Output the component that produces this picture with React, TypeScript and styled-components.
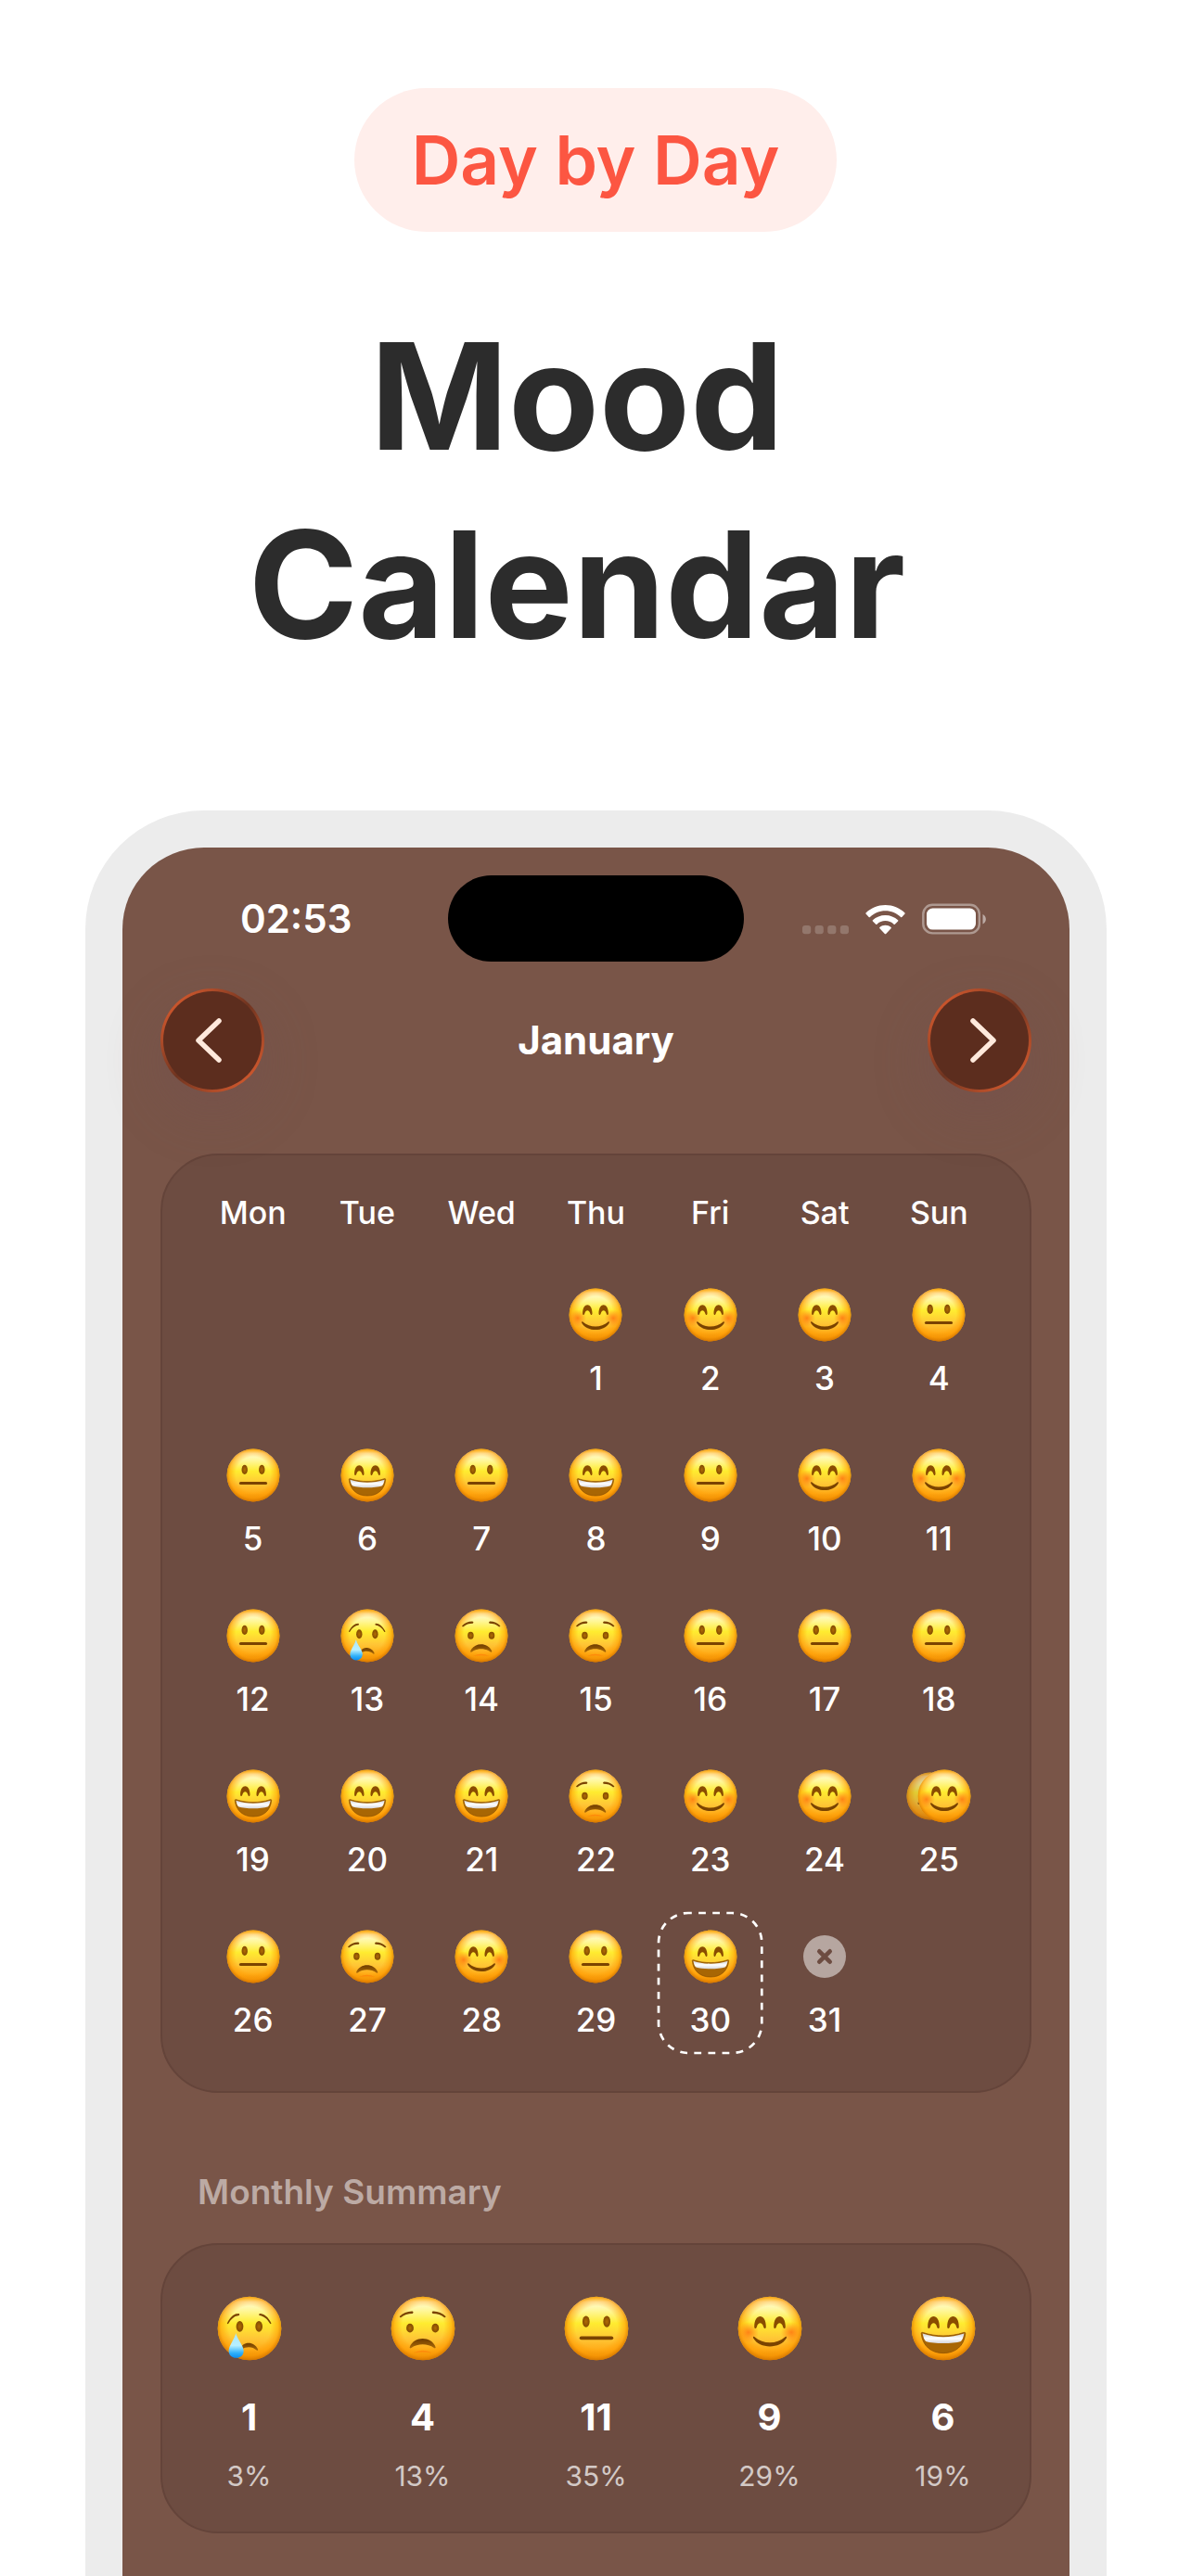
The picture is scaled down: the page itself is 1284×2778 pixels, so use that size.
import React from "react";
import styled, { createGlobalStyle } from "styled-components";

const GlobalStyle = createGlobalStyle`
  *, *::before, *::after { box-sizing: border-box; }
  body {
    margin: 0;
    background: #ffffff;
    font-family: Inter, "Liberation Sans", sans-serif;
    -webkit-font-smoothing: antialiased;
  }
`;

type Mood = "crying" | "worried" | "neutral" | "smiling" | "grinning";

const Page = styled.main`
  min-height: 100vh;
  display: flex;
  flex-direction: column;
  align-items: center;
  padding-top: 95px;
`;

const Tag = styled.p`
  margin: 0;
  padding: 0 62px;
  border-radius: 78px;
  background: #ffeeeb;
  color: #fc5642;
  font-size: 73px;
  font-weight: 600;
  line-height: 155px;
`;

const Title = styled.h1`
  margin: 76px 0 142px;
  padding-right: 40px;
  color: #2c2c2c;
  font-size: 160px;
  font-weight: 700;
  line-height: 203px;
  text-align: center;
`;

const Phone = styled.section`
  flex: 1;
  display: flex;
  align-self: stretch;
  margin: 0 91px 0 92px;
  border: 40px solid #ececec;
  border-bottom: 0;
  border-radius: 128px 128px 0 0;
  background: #ececec;
`;

const Screen = styled.div`
  flex: 1;
  min-width: 0;
  padding: 30px 41px 40px;
  border-radius: 88px 88px 0 0;
  background: #795548;
`;

const StatusBar = styled.div`
  display: grid;
  grid-template-columns: 1fr 319px 1fr;
  align-items: center;
  padding: 0 44px;
`;

const Clock = styled.time`
  padding-left: 42px;
  color: #ffffff;
  font-size: 42px;
  font-weight: 600;
  line-height: 48px;
`;

const Island = styled.div`
  height: 93px;
  border-radius: 47px;
  background: #000000;
`;

const StatusIcons = styled.div`
  display: flex;
  align-items: flex-end;
  justify-content: flex-end;
  gap: 18px;
  padding-right: 4px;
`;

const MonthNav = styled.nav`
  display: flex;
  align-items: center;
  justify-content: space-between;
  margin: 29px 0 66px;
`;

const NavButton = styled.button`
  display: grid;
  place-items: center;
  width: 112px;
  height: 112px;
  padding: 0;
  border: 3px solid transparent;
  border-radius: 50%;
  background:
    linear-gradient(#5c2d1e, #5c2d1e) padding-box,
    linear-gradient(135deg, #c9552c 15%, #6f3420 50%, #c9552c 85%) border-box;
  box-shadow: 0 22px 60px rgba(112, 76, 84, 0.3);
`;

const MonthName = styled.h2`
  margin: 0;
  color: #ffffff;
  font-size: 42px;
  font-weight: 700;
  line-height: 52px;
`;

const Card = styled.div`
  border: 2px solid #64443a;
  border-radius: 62px;
  background: #6d4c41;
`;

const CalendarCard = styled(Card)`
  padding: 42px 36px 30px;
`;

const CalendarTable = styled.table`
  width: 100%;
  table-layout: fixed;
  border-collapse: collapse;
`;

const Weekday = styled.th`
  padding: 0 0 32px;
  color: #ffffff;
  font-size: 34px;
  font-weight: 500;
  line-height: 40px;
`;

const DayCell = styled.td`
  padding: 10px 5px;
`;

const DayButton = styled.button`
  position: relative;
  display: flex;
  flex-direction: column;
  align-items: center;
  gap: 19px;
  width: 100%;
  padding: 19px 0 17px;
  border: 0;
  background: none;
  color: #ffffff;
  font-family: inherit;
  font-size: 35px;
  font-weight: 500;
  line-height: 40px;
`;

const MoodSlot = styled.span`
  display: flex;
  align-items: center;
  justify-content: center;
  height: 58px;
`;

const FaceSvg = styled.svg<{ $size: number }>`
  display: block;
  flex: none;
  width: ${(p) => p.$size}px;
  height: ${(p) => p.$size}px;
`;

const EarlierMood = styled.span`
  margin-right: -40px;
  opacity: 0.8;
`;

const LatestMood = styled.span`
  position: relative;
`;

const TodayOutline = styled.svg`
  position: absolute;
  inset: 0;
  width: 100%;
  height: 100%;
  overflow: visible;

  rect {
    width: calc(100% - 2px);
    height: calc(100% - 2px);
  }
`;

const SectionTitle = styled.h3`
  margin: 83px 0 31px;
  padding-left: 40px;
  color: #bcaaa4;
  font-size: 37px;
  font-weight: 600;
  line-height: 48px;
`;

const SummaryCard = styled(Card).attrs({ as: "ul" })`
  display: grid;
  grid-template-columns: repeat(5, 1fr);
  margin: 0;
  padding: 55px 0 42px;
  list-style: none;
`;

const SummaryItem = styled.li`
  display: flex;
  flex-direction: column;
  align-items: center;
`;

const Count = styled.strong`
  margin: 37px 0 21px;
  color: #ffffff;
  font-size: 40px;
  font-weight: 700;
  line-height: 48px;
`;

const Percent = styled.span`
  color: #d3c9c6;
  font-size: 30px;
  font-weight: 400;
  line-height: 36px;
`;

const HiddenDefs = styled.svg`
  position: absolute;
  width: 0;
  height: 0;
`;

const INK = "#7a4300";

function FacePaints() {
  return (
    <HiddenDefs aria-hidden="true">
      <defs>
        <linearGradient id="skin" x1="0" y1="0" x2="0" y2="1">
          <stop offset="0" stopColor="#ffd83a" />
          <stop offset="0.08" stopColor="#fffbd0" />
          <stop offset="0.22" stopColor="#fff79a" />
          <stop offset="0.42" stopColor="#ffec30" />
          <stop offset="0.66" stopColor="#ffc636" />
          <stop offset="0.84" stopColor="#ffab17" />
          <stop offset="1" stopColor="#dd7f04" />
        </linearGradient>
        <radialGradient id="rim" cx="0.5" cy="0.48" r="0.53">
          <stop offset="0.62" stopColor="#ff9c00" stopOpacity="0" />
          <stop offset="0.84" stopColor="#ff9a00" stopOpacity="0.55" />
          <stop offset="1" stopColor="#cf7200" stopOpacity="1" />
        </radialGradient>
        <radialGradient id="blush">
          <stop offset="0" stopColor="#ff7410" stopOpacity="0.85" />
          <stop offset="1" stopColor="#ff7f10" stopOpacity="0" />
        </radialGradient>
        <radialGradient id="eye">
          <stop offset="0" stopColor="#b06c05" />
          <stop offset="1" stopColor="#824a00" />
        </radialGradient>
        <linearGradient id="frown" x1="0" y1="0" x2="0" y2="1">
          <stop offset="0" stopColor="#6d3b00" />
          <stop offset="1" stopColor="#ac6a06" />
        </linearGradient>
        <linearGradient id="teeth" x1="0" y1="0" x2="0" y2="1">
          <stop offset="0" stopColor="#cfd2d8" />
          <stop offset="0.5" stopColor="#ffffff" />
          <stop offset="1" stopColor="#d5d5da" />
        </linearGradient>
        <linearGradient id="tear" x1="0" y1="0" x2="0" y2="1">
          <stop offset="0" stopColor="#a9e6fb" />
          <stop offset="0.5" stopColor="#b8f0ff" />
          <stop offset="0.8" stopColor="#2fb0fa" />
          <stop offset="1" stopColor="#0a8df0" />
        </linearGradient>
      </defs>
    </HiddenDefs>
  );
}

const archEye = (x: number) =>
  `M${x - 9} 47 C${x - 9} 26 ${x + 9} 26 ${x + 9} 47 C${x + 9} 51 ${x + 6} 51 ${x + 5} 47 C${x + 3} 40 ${x - 3} 40 ${x - 5} 47 C${x - 6} 51 ${x - 9} 51 ${x - 9} 47Z`;

const features: Record<Mood, React.ReactNode> = {
  crying: (
    <>
      <path d="M15.500 42 C20 32 27 27 33 27 Q35.500 27.500 34 30 C27 31 22 35 17.500 42.500 Q16 44 15.500 42Z" fill={INK} />
      <path d="M83.500 42 C79 32 72 27 66 27 Q63.500 27.500 65 30 C72 31 77 35 81.500 42.500 Q83 44 83.500 42Z" fill={INK} />
      <ellipse cx="35" cy="47" rx="5.500" ry="8.500" fill="url(#eye)" />
      <ellipse cx="64.500" cy="47" rx="5.500" ry="8.500" fill="url(#eye)" />
      <path d="M35 83 C39 69 57 69 63 82 Q63.500 85 61 83.500 C55 78 46 77 38 82Z" fill="url(#frown)" />
      <path d="M29 57 C31 67 41 76 41 84.500 C41 91 36 95.500 29.500 95.500 C23 95.500 18 91 18 84.500 C18 76 27 67 29 57Z" fill="url(#tear)" />
    </>
  ),
  worried: (
    <>
      <path d="M14 31.500 C19 26 27 23 34 23.500 Q36.500 25 34 27 C27 27 21 29 16.500 33 Q14 34 14 31.500Z" fill={INK} />
      <path d="M85 31.500 C80 26 72 23 65 23.500 Q62.500 25 65 27 C72 27 78 29 82.500 33 Q85 34 85 31.500Z" fill={INK} />
      <ellipse cx="30" cy="49.500" rx="5.600" ry="7" fill="url(#eye)" />
      <ellipse cx="69" cy="49.500" rx="5.600" ry="7" fill="url(#eye)" />
      <path d="M29.500 79 C36 61.500 63 61.500 69.500 79 Q69.500 81.500 67 80 C57 73 42 73 32 80 Q29.500 81.500 29.500 79Z" fill="url(#frown)" />
      <path d="M35 88 Q50 80 64 88 Q50 85 35 88Z" fill="#ff7f0a" opacity="0.7" />
    </>
  ),
  neutral: (
    <>
      <ellipse cx="34" cy="39.500" rx="5.500" ry="8.800" fill="url(#eye)" />
      <ellipse cx="66" cy="39.500" rx="5.500" ry="8.800" fill="url(#eye)" />
      <rect x="24" y="62" width="52" height="5.400" rx="2.700" fill={INK} />
    </>
  ),
  smiling: (
    <>
      <circle cx="17" cy="56" r="16" fill="url(#blush)" />
      <circle cx="83" cy="56" r="16" fill="url(#blush)" />
      <path d={archEye(35)} fill="#8a4d00" />
      <path d={archEye(65)} fill="#8a4d00" />
      <path d="M24.500 65 C23.500 62.500 25.500 62 27 63.500 C39 74.500 61 74.500 73 63.500 C74.500 62 76.500 62.500 75.500 65 C66 82 34 82 24.500 65Z" fill={INK} />
    </>
  ),
  grinning: (
    <>
      <path d={archEye(35)} fill="#8a4d00" />
      <path d={archEye(65)} fill="#8a4d00" />
      <path d="M16 58 C16 56 17.500 56 19 56.500 C38 63 62 63 81 56.500 C82.500 56 84 56 84 58 C82 77 69 88 50 88 C31 88 18 77 16 58Z" fill="#a86604" stroke="#824800" />
      <path d="M18 58 C38 65 62 65 82 58 C81 63 79.500 68 77 70 C65 74 35 74 23 70 C20.500 68 19 63 18 58Z" fill="url(#teeth)" />
    </>
  ),
};

function Face({ mood, size }: { mood: Mood; size: number }) {
  return (
    <FaceSvg $size={size} viewBox="0 0 100 100" role="img" aria-label={mood}>
      <circle cx="50" cy="50" r="49" fill="url(#skin)" />
      <circle cx="50" cy="50" r="49" fill="url(#rim)" />
      {features[mood]}
    </FaceSvg>
  );
}

function Chevron({ direction }: { direction: "left" | "right" }) {
  const d = direction === "left" ? "M25 4 L3 25 L25 46" : "M11 4 L33 25 L11 46";
  return (
    <svg width="36" height="50" viewBox="0 0 36 50" fill="none" aria-hidden="true">
      <path d={d} stroke="#ffe9dc" strokeWidth="5.500" strokeLinecap="round" strokeLinejoin="round" />
    </svg>
  );
}

function SignalDots() {
  return (
    <svg width="50" height="10" viewBox="0 0 50 10" aria-hidden="true">
      {[0, 13.6, 27.2, 40.8].map((x) => (
        <rect key={x} x={x} y="0" width="9.200" height="9.200" rx="3" fill="#ffffff" fillOpacity="0.2" />
      ))}
    </svg>
  );
}

function WifiIcon() {
  return (
    <svg width="43" height="33" viewBox="0 0 43 33" fill="#ffffff" aria-hidden="true">
      <path d="M21.500 1 C29.600 1 37 4.200 42.500 9.400 Q43 10 42.500 10.600 L39.300 13.900 Q38.700 14.400 38.100 13.900 C33.700 9.700 27.900 7.200 21.500 7.200 C15.100 7.200 9.300 9.700 4.900 13.900 Q4.300 14.400 3.700 13.900 L0.500 10.600 Q0 10 0.500 9.400 C6 4.200 13.400 1 21.500 1Z" />
      <path d="M21.500 11.900 C26.700 11.900 31.500 13.900 35.100 17.200 Q35.700 17.800 35.100 18.400 L31.800 21.700 Q31.200 22.200 30.600 21.700 C28.200 19.500 25 18.100 21.500 18.100 C18 18.100 14.800 19.500 12.400 21.700 Q11.800 22.200 11.200 21.700 L7.900 18.400 Q7.300 17.800 7.900 17.200 C11.500 13.900 16.300 11.900 21.500 11.900Z" />
      <path d="M21.500 22.800 C23.800 22.800 25.900 23.600 27.600 25 Q28.200 25.600 27.600 26.200 L22.200 31.900 Q21.500 32.500 20.800 31.900 L15.400 26.200 Q14.800 25.600 15.400 25 C17.100 23.600 19.200 22.800 21.500 22.800Z" />
    </svg>
  );
}

function BatteryIcon() {
  return (
    <svg width="70" height="34" viewBox="0 0 70 34" aria-hidden="true">
      <rect x="1.300" y="1.800" width="60.500" height="30.600" rx="10" fill="none" stroke="#ffffff" strokeOpacity="0.4" strokeWidth="2.400" />
      <rect x="5" y="5.600" width="53" height="23" rx="6.500" fill="#ffffff" />
      <path d="M65.500 12 C70 14 70 20.500 65.500 22.500Z" fill="#ffffff" fillOpacity="0.5" />
    </svg>
  );
}

function NoEntryIcon() {
  return (
    <svg width="46" height="46" viewBox="0 0 46 46" role="img" aria-label="no entry">
      <circle cx="23" cy="23" r="23" fill="#b6a6a0" />
      <path d="M17.300 17.300 L28.700 28.700 M28.700 17.300 L17.300 28.700" stroke="#6d4c41" strokeWidth="4.600" strokeLinecap="round" />
    </svg>
  );
}

const weekdays = ["Mon", "Tue", "Wed", "Thu", "Fri", "Sat", "Sun"];

const FIRST_WEEKDAY = 3;
const TODAY = 30;

const moods: (Mood | null)[] = [
  "smiling", "smiling", "smiling", "neutral",
  "neutral", "grinning", "neutral", "grinning", "neutral", "smiling", "smiling",
  "neutral", "crying", "worried", "worried", "neutral", "neutral", "neutral",
  "grinning", "grinning", "grinning", "worried", "smiling", "smiling", "smiling",
  "neutral", "worried", "smiling", "neutral", "grinning", null,
];

const earlierMoods: Record<number, Mood> = { 25: "neutral" };

const weeks = Array.from({ length: 5 }, (_, w) =>
  weekdays.map((_, d) => {
    const day = w * 7 + d - FIRST_WEEKDAY + 1;
    return day >= 1 && day <= moods.length ? day : null;
  }),
);

const summary: { mood: Mood; count: number; share: string }[] = [
  { mood: "crying", count: 1, share: "3%" },
  { mood: "worried", count: 4, share: "13%" },
  { mood: "neutral", count: 11, share: "35%" },
  { mood: "smiling", count: 9, share: "29%" },
  { mood: "grinning", count: 6, share: "19%" },
];

function Day({ day }: { day: number }) {
  const mood = moods[day - 1];
  const earlier = earlierMoods[day];
  return (
    <DayButton type="button">
      {day === TODAY && (
        <TodayOutline aria-hidden="true">
          <rect x="1" y="1" rx="32" fill="none" stroke="#ffffff" strokeWidth="2.700" strokeDasharray="7.800 7.300" strokeDashoffset="4" />
        </TodayOutline>
      )}
      <MoodSlot>
        {earlier && (
          <EarlierMood>
            <Face mood={earlier} size={52} />
          </EarlierMood>
        )}
        {mood ? (
          <LatestMood>
            <Face mood={mood} size={58} />
          </LatestMood>
        ) : (
          <NoEntryIcon />
        )}
      </MoodSlot>
      <span>{day}</span>
    </DayButton>
  );
}

export default function App() {
  return (
    <Page>
      <GlobalStyle />
      <FacePaints />
      <Tag>Day by Day</Tag>
      <Title>
        Mood
        <br />
        Calendar
      </Title>
      <Phone>
        <Screen>
          <StatusBar>
            <Clock>02:53</Clock>
            <Island />
            <StatusIcons>
              <SignalDots />
              <WifiIcon />
              <BatteryIcon />
            </StatusIcons>
          </StatusBar>
          <MonthNav aria-label="Month">
            <NavButton type="button" aria-label="Previous month">
              <Chevron direction="left" />
            </NavButton>
            <MonthName>January</MonthName>
            <NavButton type="button" aria-label="Next month">
              <Chevron direction="right" />
            </NavButton>
          </MonthNav>
          <CalendarCard>
            <CalendarTable>
              <thead>
                <tr>
                  {weekdays.map((name) => (
                    <Weekday key={name} scope="col">{name}</Weekday>
                  ))}
                </tr>
              </thead>
              <tbody>
                {weeks.map((week, w) => (
                  <tr key={w}>
                    {week.map((day, d) => (
                      <DayCell key={d}>{day && <Day day={day} />}</DayCell>
                    ))}
                  </tr>
                ))}
              </tbody>
            </CalendarTable>
          </CalendarCard>
          <SectionTitle>Monthly Summary</SectionTitle>
          <SummaryCard>
            {summary.map(({ mood, count, share }) => (
              <SummaryItem key={mood}>
                <Face mood={mood} size={70} />
                <Count>{count}</Count>
                <Percent>{share}</Percent>
              </SummaryItem>
            ))}
          </SummaryCard>
        </Screen>
      </Phone>
    </Page>
  );
}
